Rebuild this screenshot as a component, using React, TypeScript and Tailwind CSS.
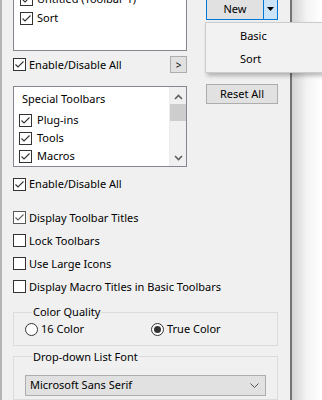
import React from 'react';

const font = { fontFamily: '"Noto Sans", "Segoe UI", sans-serif' };

const Check = ({ on, dim }: { on?: boolean; dim?: boolean }) => (
  <span
    className={`flex h-[13px] w-[13px] shrink-0 items-center justify-center border bg-white ${
      dim ? 'border-[#5a5a5a]' : 'border-[#333333]'
    }`}
  >
    {on && (
      <svg width="11" height="11" viewBox="0 0 11 11">
        <polyline
          points="1.5,5.5 4,8 9.5,2.5"
          fill="none"
          stroke={dim ? '#606060' : '#333333'}
          strokeWidth="1.1"
        />
      </svg>
    )}
  </span>
);

const CheckRow = ({ label, on, dim, gap = 'gap-[3px]' }: { label: string; on?: boolean; dim?: boolean; gap?: string }) => (
  <div className={`flex items-center ${gap}`}>
    <Check on={on} dim={dim} />
    <span>{label}</span>
  </div>
);

const Radio = ({ label, on }: { label: string; on?: boolean }) => (
  <div className="flex items-center gap-[3px]">
    <span className="flex h-[13px] w-[13px] items-center justify-center rounded-full border border-[#333333] bg-white">
      {on && <span className="h-[7px] w-[7px] rounded-full bg-[#333333]" />}
    </span>
    <span>{label}</span>
  </div>
);

const Chevron = ({ up }: { up?: boolean }) => (
  <svg width="9" height="6" viewBox="0 0 9 6">
    <polyline
      points={up ? '1,5 4.5,1.5 8,5' : '1,1 4.5,4.5 8,1'}
      fill="none"
      stroke="#606060"
      strokeWidth="1.6"
    />
  </svg>
);

export default function App() {
  return (
    <div className="relative flex h-[400px] w-[322px] overflow-hidden bg-white text-[11px] leading-[16px] text-black" style={font}>
      <div className="flex w-[292px] shrink-0 flex-col border-l-2 border-r-2 border-l-[#b4b4b4] border-r-[#737373] bg-[#f0f0f0] pl-[11px]">
        <div className="flex">
          <div className="flex w-[174px] flex-col">
            <div className="-mt-[14px] flex h-[65px] flex-col border border-[#828790] bg-white pl-[6px] pt-[4px]">
              <div className="h-[18px]"><CheckRow label="Untitled (Toolbar 1)" on gap="gap-[4px]" /></div>
              <div className="h-[18px] flex items-center"><CheckRow label="Sort" on gap="gap-[4px]" /></div>
            </div>
            <div className="mt-[5px] flex h-[17px] items-center justify-between">
              <CheckRow label="Enable/Disable All" on />
              <button className="flex h-[17px] w-[17px] items-center justify-center border border-[#adadad] bg-[#e1e1e1] text-[10px]">
                &gt;
              </button>
            </div>
            <div className="mt-[13px] flex h-[81px] border border-[#828790] bg-white">
              <div className="flex flex-1 flex-col pt-[4px]">
                <div className="flex h-[20px] items-start pl-[8px]">Special Toolbars</div>
                <div className="flex h-[18px] items-center pl-[5px]"><CheckRow label="Plug-ins" on gap="gap-[5px]" /></div>
                <div className="flex h-[18px] items-center pl-[5px]"><CheckRow label="Tools" on gap="gap-[5px]" /></div>
                <div className="flex h-[18px] items-center pl-[5px]"><CheckRow label="Macros" on gap="gap-[5px]" /></div>
              </div>
              <div className="flex w-[17px] flex-col items-center border-l border-l-[#ececec] bg-[#f0f0f0]">
                <div className="flex h-[17px] w-full items-center justify-center pt-[2px]"><Chevron up /></div>
                <div className="h-[17px] w-[16px] bg-[#cdcdcd]" />
                <div className="flex-1" />
                <div className="flex h-[17px] w-full items-center justify-center"><Chevron /></div>
              </div>
            </div>
          </div>
          <div className="ml-[19px] flex flex-col">
            <div className="-mt-[3px] flex h-[23px] w-[72px] border border-[#0078d7] bg-[#e1e1e1]">
              <div className="flex flex-1 items-center justify-center border-r border-r-[#0078d7]">New</div>
              <div className="flex w-[13px] items-center justify-center bg-[#cce4f7]">
                <svg width="7" height="4" viewBox="0 0 7 4"><polygon points="0,0 7,0 3.5,4" fill="#000" /></svg>
              </div>
            </div>
            <button className="mt-[64px] flex h-[20px] w-[72px] items-center justify-center border border-[#adadad] bg-[#e1e1e1]">
              Reset All
            </button>
          </div>
        </div>

        <div className="mt-[9px] flex h-[17px] items-center">
          <CheckRow label="Enable/Disable All" on />
        </div>

        <div className="mt-[14px] flex flex-col">
          <div className="flex h-[23px] items-center"><CheckRow label="Display Toolbar Titles" on dim /></div>
          <div className="flex h-[23px] items-center"><CheckRow label="Lock Toolbars" /></div>
          <div className="flex h-[23px] items-center"><CheckRow label="Use Large Icons" /></div>
          <div className="flex h-[23px] items-center"><CheckRow label="Display Macro Titles in Basic Toolbars" /></div>
        </div>

        <fieldset className="mt-[6px] h-[51px] w-[265px] border border-[#dcdcdc] pl-[11px]">
          <legend className="ml-[7px] px-[1px]">Color Quality</legend>
          <div className="mt-[1px] flex">
            <div className="w-[126px]"><Radio label="16 Color" /></div>
            <Radio label="True Color" on />
          </div>
        </fieldset>

        <fieldset className="mt-[3px] h-[63px] w-[265px] border border-[#dcdcdc] pl-[11px]">
          <legend className="ml-[7px] px-[1px]">Drop-down List Font</legend>
          <div className="mt-[10px] flex h-[21px] w-[241px] items-center justify-between border border-[#adadad] bg-[#e1e1e1] pl-[4px] pr-[6px]">
            <span>Microsoft Sans Serif</span>
            <svg width="9" height="5" viewBox="0 0 9 5"><polyline points="0.5,0.5 4.5,4.5 8.5,0.5" fill="none" stroke="#555" strokeWidth="1" /></svg>
          </div>
        </fieldset>
      </div>
      <div className="flex-1 bg-gradient-to-r from-[#d4d4d4] via-[#f4f4f4] to-white" />

      <div className="absolute left-[205px] top-[22px] flex h-[51px] w-[120px] flex-col border border-[#cccccc] bg-[#f2f2f2] pt-[1px] shadow-[2px_3px_4px_rgba(0,0,0,0.25)]">
        <div className="flex h-[23px] items-center pl-[34px]">Basic</div>
        <div className="flex h-[23px] items-center pl-[34px]">Sort</div>
      </div>
    </div>
  );
}
